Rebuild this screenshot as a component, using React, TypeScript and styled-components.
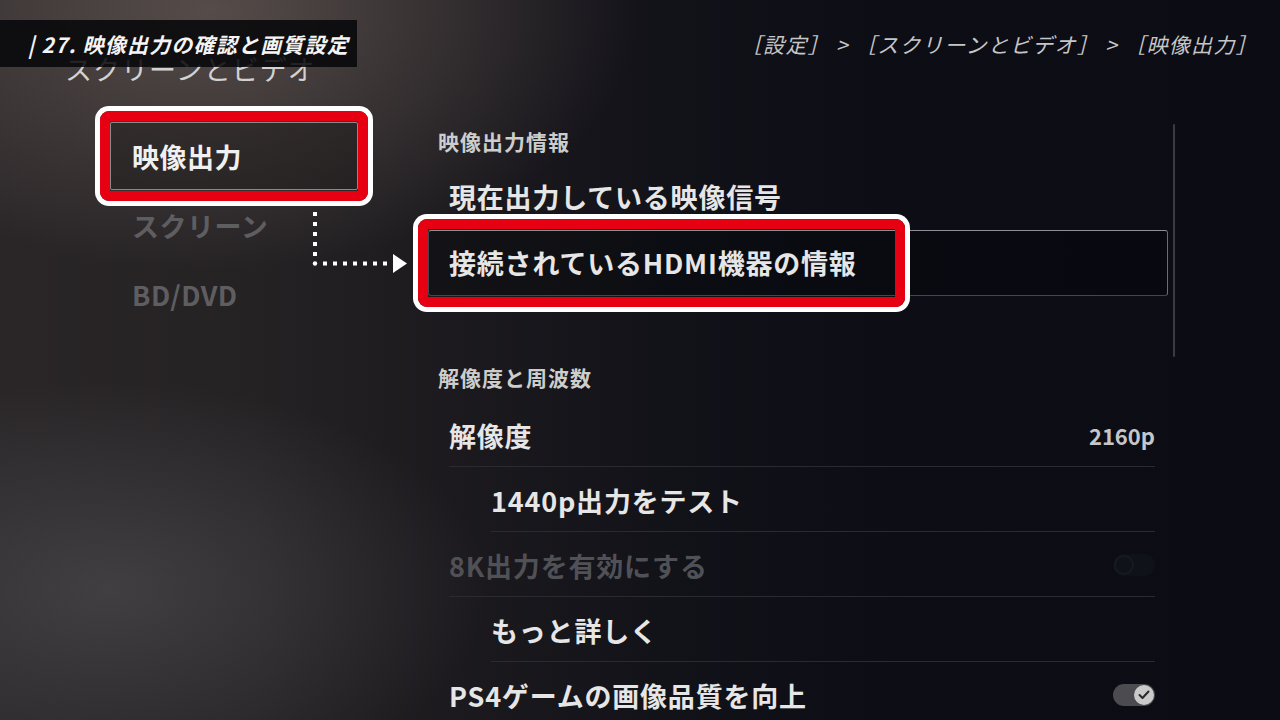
import React from "react";
import styled, { createGlobalStyle, css } from "styled-components";

const GlobalStyle = createGlobalStyle`
  html, body {
    margin: 0;
    padding: 0;
    background: #0b0c14;
  }
  body {
    font-family: "Noto Sans CJK JP", "Noto Sans", sans-serif;
  }
`;

const Screen = styled.div`
  position: relative;
  width: 1280px;
  height: 720px;
  overflow: hidden;
  color: #e6e6e6;
  background:
    radial-gradient(ellipse 430px 260px at 210px 10px, rgba(125, 110, 104, 0.55), rgba(125, 110, 104, 0) 100%),
    radial-gradient(ellipse 380px 210px at 110px 590px, rgba(95, 95, 100, 0.45), rgba(95, 95, 100, 0) 100%),
    linear-gradient(90deg, #2a2628 0%, #252224 20%, #1c1a1e 35%, #121219 52%, #0c0d15 70%, #0b0c14 100%);
`;

const Header = styled.header`
  display: flex;
  justify-content: space-between;
  align-items: flex-start;
  height: 100px;
  padding: 0 22px 0 65px;
  box-sizing: border-box;
`;

const PageTitle = styled.h1`
  margin: 51px 0 0;
  font-size: 27px;
  font-weight: 400;
  line-height: 36px;
  letter-spacing: 1px;
  color: #d2d2d2;
`;

const Breadcrumb = styled.div`
  margin-top: 30px;
  font-size: 21px;
  line-height: 28px;
  letter-spacing: 1.3px;
  font-style: italic;
  color: #c6c6c6;
  white-space: pre;
`;

// tutorial caption laid over the page title
const GuideLabel = styled.div`
  position: absolute;
  top: 20px;
  left: 0;
  width: 357px;
  height: 47px;
  display: flex;
  align-items: center;
  padding-left: 28px;
  box-sizing: border-box;
  background: rgba(6, 6, 8, 0.86);
  color: #f4f4f4;
  font-size: 21px;
  font-weight: 700;
  font-style: italic;
  letter-spacing: 1.2px;
  white-space: nowrap;
`;

const Body = styled.div`
  display: flex;
  align-items: flex-start;
`;

const Sidebar = styled.nav`
  width: 428px;
  padding: 22px 0 0 110px;
  box-sizing: border-box;
  display: flex;
  flex-direction: column;
`;

const SideItem = styled.div<{ $active?: boolean }>`
  position: relative;
  width: 248px;
  height: 69px;
  display: flex;
  align-items: center;
  padding-left: 21px;
  box-sizing: border-box;
  font-size: 27px;
  font-weight: 700;
  letter-spacing: 0.5px;
  color: #5e5e61;
  border: 1px solid transparent;
  ${(p) =>
    p.$active &&
    css`
      height: 68px;
      margin-bottom: 1px;
      color: #f0f0f0;
      border-color: #8c8888;
      background: rgba(22, 19, 21, 0.35);
      border-radius: 2px;
    `}
`;

const Main = styled.main`
  width: 740px;
  padding-top: 26px;
  display: flex;
  flex-direction: column;
`;

const SectionTitle = styled.h2<{ $gap?: number; $after?: number }>`
  margin: ${(p) => p.$gap ?? 0}px 0 ${(p) => p.$after ?? 8}px 10px;
  font-size: 21px;
  font-weight: 700;
  line-height: 30px;
  letter-spacing: 1px;
  color: #cdcdcd;
`;

const Row = styled.div<{ $focused?: boolean; $tall?: boolean }>`
  position: relative;
  height: ${(p) => (p.$tall ? 66 : 65)}px;
  padding: 0 12px 0 20px;
  box-sizing: border-box;
  display: flex;
  border: 1px solid transparent;
  border-radius: 3px;
  ${(p) =>
    p.$focused &&
    css`
      border-color: #45464d;
      border-top-color: #8e8f96;
      border-right-color: #6c6d74;
      background: rgba(4, 5, 10, 0.35);
    `}
`;

const RowBody = styled.div<{ $indent?: boolean; $line?: boolean }>`
  flex: 1;
  display: flex;
  align-items: center;
  justify-content: space-between;
  margin-left: ${(p) => (p.$indent ? 42 : 0)}px;
  border-bottom: 1px solid ${(p) => (p.$line ? "#2a2b31" : "transparent")};
`;

const Label = styled.span<{ $dim?: boolean }>`
  font-size: 27px;
  font-weight: 700;
  letter-spacing: 0.8px;
  color: ${(p) => (p.$dim ? "#505156" : "#e6e6e6")};
  white-space: nowrap;
`;

const Value = styled.span`
  font-size: 22px;
  font-weight: 700;
  color: #c6c6c8;
`;

const Toggle = styled.div<{ $off?: boolean }>`
  width: 42px;
  height: 22px;
  padding: 1px;
  box-sizing: border-box;
  border-radius: 11px;
  display: flex;
  align-items: center;
  justify-content: ${(p) => (p.$off ? "flex-start" : "flex-end")};
  background: ${(p) => (p.$off ? "#10121a" : "#4b4b50")};
`;

const Knob = styled.div<{ $off?: boolean }>`
  width: 20px;
  height: 20px;
  border-radius: 50%;
  display: flex;
  align-items: center;
  justify-content: center;
  box-sizing: border-box;
  ${(p) =>
    p.$off
      ? css`
          border: 2px solid #181a22;
          background: transparent;
        `
      : css`
          background: #cacaca;
        `}
`;

const ScrollTrack = styled.div`
  width: 2px;
  height: 233px;
  margin: 24px 0 0 5px;
  border-radius: 1px;
  background: #393a42;
`;

// red/white callout frame from the guide, sits over the focused item
const Callout = styled.div<{ $width?: number }>`
  position: absolute;
  top: -12px;
  bottom: -12px;
  left: -11px;
  ${(p) => (p.$width ? `width: ${p.$width}px;` : "right: -11px;")}
  border: 10px solid #e60012;
  border-radius: 9px;
  box-shadow: 0 0 0 5px #ffffff;
  box-sizing: border-box;
  pointer-events: none;
`;

const Connector = styled.svg`
  position: absolute;
  left: 305px;
  top: 205px;
`;

const CheckMark = () => (
  <svg width="12" height="10" viewBox="0 0 12 10">
    <polyline points="1.5,5 4.5,8 10.5,1.5" fill="none" stroke="#2a2a2e" strokeWidth="2" strokeLinecap="round" strokeLinejoin="round" />
  </svg>
);

const vDots = [7, 17, 27, 37, 47];
const hDots = [18, 28, 38, 48, 58, 68, 78];

const App: React.FC = () => {
  return (
    <>
      <GlobalStyle />
      <Screen>
        <Header>
          <PageTitle>スクリーンとビデオ</PageTitle>
          <Breadcrumb>［設定］ &gt; ［スクリーンとビデオ］ &gt; ［映像出力］</Breadcrumb>
        </Header>
        <GuideLabel>| 27. 映像出力の確認と画質設定</GuideLabel>

        <Body>
          <Sidebar>
            <SideItem $active>
              映像出力
              <Callout />
            </SideItem>
            <SideItem>スクリーン</SideItem>
            <SideItem>BD/DVD</SideItem>
          </Sidebar>

          <Main>
            <SectionTitle>映像出力情報</SectionTitle>
            <Row $tall>
              <RowBody>
                <Label>現在出力している映像信号</Label>
              </RowBody>
            </Row>
            <Row $tall $focused>
              <RowBody>
                <Label>接続されているHDMI機器の情報</Label>
              </RowBody>
              <Callout $width={487} />
            </Row>

            <SectionTitle $gap={66} $after={11}>解像度と周波数</SectionTitle>
            <Row>
              <RowBody $line>
                <Label>解像度</Label>
                <Value>2160p</Value>
              </RowBody>
            </Row>
            <Row>
              <RowBody $line $indent>
                <Label>1440p出力をテスト</Label>
              </RowBody>
            </Row>
            <Row>
              <RowBody $line>
                <Label $dim>8K出力を有効にする</Label>
                <Toggle $off>
                  <Knob $off />
                </Toggle>
              </RowBody>
            </Row>
            <Row>
              <RowBody $line $indent>
                <Label>もっと詳しく</Label>
              </RowBody>
            </Row>
            <Row>
              <RowBody>
                <Label>PS4ゲームの画像品質を向上</Label>
                <Toggle>
                  <Knob>
                    <CheckMark />
                  </Knob>
                </Toggle>
              </RowBody>
            </Row>
          </Main>

          <ScrollTrack />
        </Body>

        <Connector width="110" height="75" viewBox="0 0 110 75">
          {vDots.map((y) => (
            <rect key={`v${y}`} x="8" y={y} width="4" height="4" fill="#fff" />
          ))}
          <circle cx="10" cy="58.5" r="2.2" fill="#fff" />
          {hDots.map((x) => (
            <rect key={`h${x}`} x={x} y="56.5" width="4" height="4" fill="#fff" />
          ))}
          <polygon points="88,49 102,58.5 88,68" fill="#fff" />
        </Connector>
      </Screen>
    </>
  );
};

export default App;
